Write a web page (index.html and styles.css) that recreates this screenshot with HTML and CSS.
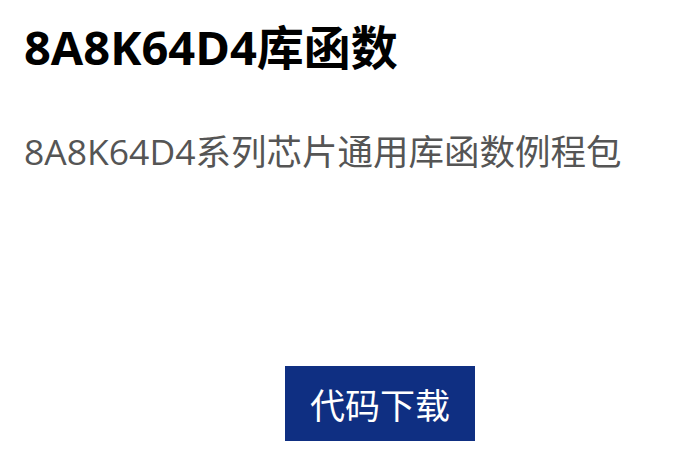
FILE: index.html
```html
<!DOCTYPE html>
<html lang="zh-CN">
<head>
<meta charset="utf-8">
<title>8A8K64D4库函数</title>
<link rel="stylesheet" href="styles.css">
</head>
<body>
<main class="card">
  <h1 class="card-title">8A8K64D4库函数</h1>
  <p class="card-desc">8A8K64D4系列芯片通用库函数例程包</p>
  <div class="card-actions">
    <a class="btn-download" href="#">代码下载</a>
  </div>
</main>
</body>
</html>
```
FILE: styles.css
```css
html, body {
  margin: 0;
  padding: 0;
  background: #ffffff;
}

.card {
  display: flex;
  flex-direction: column;
  padding: 19px 24px 0 24px;
  font-family: "Open Sans", "Noto Sans CJK SC", sans-serif;
}

.card-title {
  margin: 0;
  font-size: 47px;
  line-height: 56px;
  font-weight: 700;
  color: #000000;
}

.card-desc {
  margin: 54px 0 0 0;
  font-size: 35.5px;
  line-height: 44px;
  font-weight: 400;
  color: #555555;
}

.card-actions {
  display: flex;
  padding-left: 261px;
  margin-top: 193px;
}

.btn-download {
  display: flex;
  align-items: center;
  justify-content: center;
  width: 190px;
  height: 75px;
  background: #0f2f82;
  color: #ffffff;
  font-size: 35px;
  text-decoration: none;
}
```
